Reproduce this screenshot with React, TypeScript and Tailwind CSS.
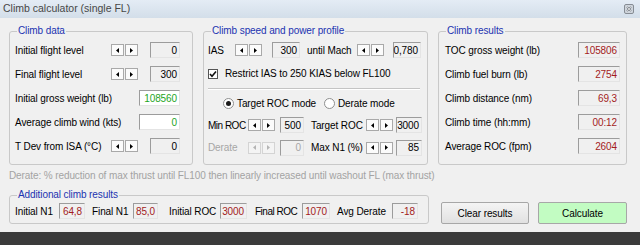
import React from "react";

const Arrow = ({ dir, off }: { dir: "l" | "r"; off?: boolean }) => (
  <svg width="3" height="5" viewBox="0 0 3 5">
    <path d={dir === "l" ? "M3 0 L0 2.5 L3 5 Z" : "M0 0 L3 2.5 L0 5 Z"} fill={off ? "#b4b4b4" : "#000"} />
  </svg>
);

const Spin = ({ off }: { off?: boolean }) => (
  <div className="flex shrink-0 gap-px">
    <div className={`flex h-3 w-[13px] items-center justify-center border ${off ? "border-[#d4d4d4] bg-[#f4f4f4]" : "border-[#a9a9a9] bg-[#fbfbfb]"}`}>
      <Arrow dir="l" off={off} />
    </div>
    <div className={`flex h-3 w-[13px] items-center justify-center border ${off ? "border-[#d4d4d4] bg-[#f4f4f4]" : "border-[#a9a9a9] bg-[#fbfbfb]"}`}>
      <Arrow dir="r" off={off} />
    </div>
  </div>
);

type ValProps = { v: string; w: string; white?: boolean; color?: string; className?: string };

const Val = ({ v, w, white, color = "text-black", className = "" }: ValProps) => (
  <div
    className={`flex h-4 shrink-0 items-center justify-end border border-t-[#9c9c9c] border-l-[#9c9c9c] border-b-[#e4e4e4] border-r-[#e4e4e4] pr-[2px] ${white ? "bg-white" : "bg-[#f0f0f0]"} ${w} ${color} ${className}`}
  >
    {v}
  </div>
);

const Group = ({ title, className, children }: { title: string; className: string; children: React.ReactNode }) => (
  <fieldset className={`rounded-[3px] border border-[#c9c9c9] ${className}`}>
    <legend className="ml-[7px] px-px leading-[12px] text-[#2233b0]">{title}</legend>
    {children}
  </fieldset>
);

const red = "text-[#a31c1c]";
const green = "text-[#1ea51e]";

const LeftRow = ({ label, v, spin, white, color }: { label: string; v: string; spin?: boolean; white?: boolean; color?: string }) => (
  <div className="flex h-6 items-center pl-[5px] pr-[12px]">
    <span className="flex-1 whitespace-nowrap">{label}</span>
    {spin ? (
      <>
        <Spin />
        <Val v={v} w="w-[30px]" className="ml-[12px]" />
      </>
    ) : (
      <Val v={v} w="w-[41px]" white={white} color={color} />
    )}
  </div>
);

const ResultRow = ({ label, v }: { label: string; v: string }) => (
  <div className="flex h-6 items-center pl-[6px] pr-[6px]">
    <span className="flex-1 whitespace-nowrap">{label}</span>
    <Val v={v} w="w-[42px]" color={red} />
  </div>
);

const Radio = ({ on }: { on?: boolean }) => (
  <div className="flex h-[11px] w-[11px] shrink-0 items-center justify-center rounded-full border border-[#8e8f8f] bg-white">
    {on && <div className="h-[5px] w-[5px] rounded-full bg-[#1a1a1a]" />}
  </div>
);

const App = () => {
  return (
    <div className="flex h-[245px] w-[640px] flex-col overflow-hidden whitespace-nowrap bg-[#f0f0f0] font-['Liberation_Sans',Arial,sans-serif] text-[10px] tracking-[-0.1px] text-black">
      <div className="flex h-[18px] items-center justify-between bg-linear-to-b from-[#e4ecf5] to-[#d3dee9] pl-[3px] pr-[6px]">
        <span className="text-[10.5px] tracking-normal text-[#474747]">Climb calculator (single FL)</span>
        <svg width="10" height="10" viewBox="0 0 10 10">
          <rect x="0.5" y="0.5" width="9" height="9" rx="1.5" fill="#cfd5dc" stroke="#868c94" />
          <path d="M3 3 L7 7 M7 3 L3 7" stroke="#5a6068" strokeWidth="1.6" />
          <path d="M3 3 L7 7 M7 3 L3 7" stroke="#ffffff" strokeWidth="0.7" />
        </svg>
      </div>

      <div className="flex flex-1 flex-col pl-[9px] pt-[7px]">
        <div className="flex items-stretch gap-[10px]">
          <Group title="Climb data" className="w-[184px] pt-[1px] pb-[6px]">
            <LeftRow label="Initial flight level" v="0" spin />
            <LeftRow label="Final flight level" v="300" spin />
            <LeftRow label="Initial gross weight (lb)" v="108560" white color={green} />
            <LeftRow label="Average climb wind (kts)" v="0" white color={green} />
            <LeftRow label="T Dev from ISA (°C)" v="0" spin />
          </Group>

          <Group title="Climb speed and power profile" className="w-[225px] pt-[1px] pb-[5px]">
            <div className="flex h-6 items-center pl-[4px]">
              <span className="w-[27px]">IAS</span>
              <Spin />
              <Val v="300" w="w-[28px]" className="ml-[10px]" />
              <span className="ml-[7px] w-[50px]">until Mach</span>
              <Spin />
              <Val v="0,780" w="w-[28px]" className="ml-[9px]" />
            </div>
            <div className="flex h-[23px] items-center pl-[4px]">
              <div className="flex h-[10px] w-[10px] items-center justify-center border border-[#555] bg-white">
                <svg width="8" height="8" viewBox="0 0 8 8">
                  <path d="M1 4 L3 6.3 L7 1.5" fill="none" stroke="#111" strokeWidth="1.6" />
                </svg>
              </div>
              <span className="ml-[7px]">Restrict IAS to 250 KIAS below FL100</span>
            </div>
            <div className="mt-[3px] ml-[4px] mr-[7px] border-t border-b border-t-[#c4c4c4] border-b-white" />
            <div className="mt-[2px] flex h-[22px] items-center pl-[19px]">
              <Radio on />
              <span className="ml-[3px] w-[87px]">Target ROC mode</span>
              <Radio />
              <span className="ml-[3px]">Derate mode</span>
            </div>
            <div className="flex h-[22px] items-center pl-[4px]">
              <span className="w-[40px] tracking-[-0.5px]">Min ROC</span>
              <Spin />
              <Val v="500" w="w-[24px]" className="ml-[5px]" />
              <span className="ml-[7px] w-[55px]">Target ROC</span>
              <Spin />
              <Val v="3000" w="w-[26px]" className="ml-[3px]" />
            </div>
            <div className="flex h-[23px] items-center pl-[4px]">
              <span className="w-[40px] text-[#a6a6a6]">Derate</span>
              <Spin off />
              <Val v="0" w="w-[24px]" color="text-[#a6a6a6]" className="ml-[5px]" />
              <span className="ml-[7px] w-[55px]">Max N1 (%)</span>
              <Spin />
              <Val v="85" w="w-[26px]" className="ml-[3px]" />
            </div>
          </Group>

          <Group title="Climb results" className="w-[189px] pt-[1px] pb-[6px]">
            <ResultRow label="TOC gross weight (lb)" v="105806" />
            <ResultRow label="Climb fuel burn (lb)" v="2754" />
            <ResultRow label="Climb distance (nm)" v="69,3" />
            <ResultRow label="Climb time (hh:mm)" v="00:12" />
            <ResultRow label="Average ROC (fpm)" v="2604" />
          </Group>
        </div>

        <div className="mt-[5px] h-[12px] leading-[12px] text-[#a3a3a3]">
          Derate: % reduction of max thrust until FL100 then linearly increased until washout FL (max thrust)
        </div>

        <div className="mt-[7px] flex items-end">
          <Group title="Additional climb results" className="w-[420px] pb-[2px]">
            <div className="flex h-5 items-center pl-[5px]">
              <span className="w-[44px]">Initial N1</span>
              <Val v="64,8" w="w-[26px]" color={red} />
              <span className="ml-[7px] w-[41px]">Final N1</span>
              <Val v="85,0" w="w-[25px]" color={red} />
              <span className="ml-[11px] w-[51px]">Initial ROC</span>
              <Val v="3000" w="w-[27px]" color={red} />
              <span className="ml-[8px] w-[47px] tracking-[-0.5px]">Final ROC</span>
              <Val v="1070" w="w-[28px]" color={red} />
              <span className="ml-[7px] w-[55px]">Avg Derate</span>
              <Val v="-18" w="w-[26px]" color={red} />
            </div>
          </Group>
          <button className="ml-[12px] h-[22px] w-[88px] rounded-[2px] border border-[#a7a7a7] bg-linear-to-b from-[#f4f4f4] to-[#e1e1e1]">
            Clear results
          </button>
          <button className="ml-[9px] h-[22px] w-[89px] rounded-[2px] border border-[#a7a7a7] bg-[#c2fcc2]">
            Calculate
          </button>
        </div>
      </div>

      <div className="h-[13px] bg-[#3b3b3b]" />
    </div>
  );
};

export default App;
